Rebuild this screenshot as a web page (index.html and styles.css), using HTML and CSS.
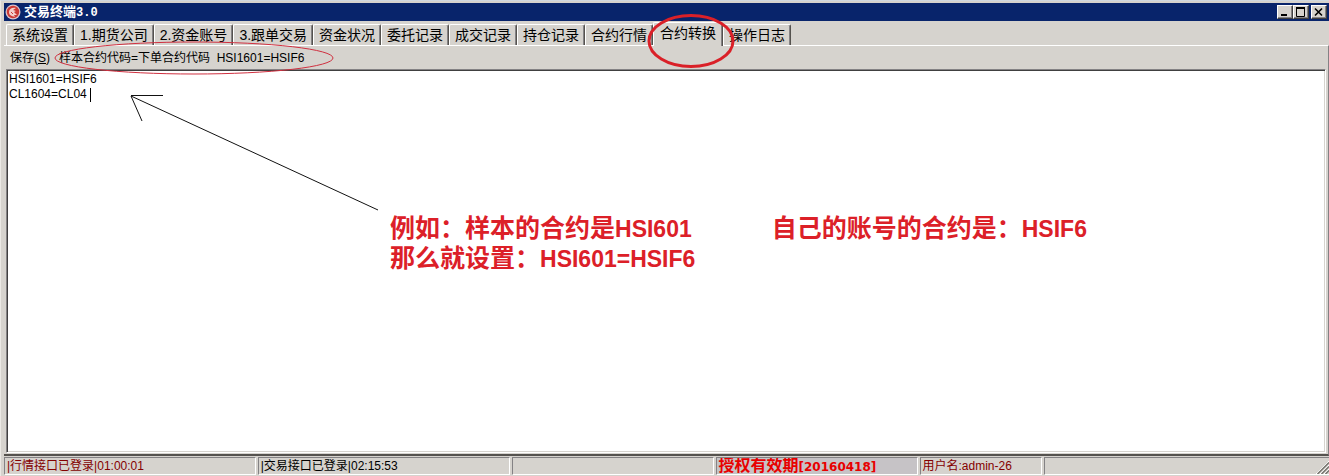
FILE: index.html
```html
<!DOCTYPE html>
<html lang="zh-CN">
<head>
<meta charset="utf-8">
<title>交易终端3.0</title>
<link rel="stylesheet" href="styles.css">
</head>
<body>
<div class="window">
  <header class="titlebar">
    <svg class="app-icon" width="16" height="16" viewBox="0 0 16 16" aria-hidden="true">
      <circle cx="8" cy="8" r="7.500" fill="#d9c3cc"/>
      <circle cx="8" cy="8" r="6.200" fill="#cc3a34"/>
      <path d="M4 8C4 5 7 3 11 4L8 6L11 7L9 8L12 11L9 11L10 13C6 12 4 11 4 8Z" fill="#f3cfcb"/>
      <path d="M6 8L8 10" stroke="#cc3a34" fill="none"/>
    </svg>
    <h1 class="title">交易终端<span class="version">3.0</span></h1>
    <div class="controls">
      <button class="control" aria-label="最小化"><svg width="12" height="10" viewBox="0 0 12 10"><path d="M2 8H8" stroke="#000" stroke-width="2"/></svg></button>
      <button class="control" aria-label="最大化"><svg width="12" height="10" viewBox="0 0 12 10"><path d="M1 1H10M1.500 1V9.500H9.500V1" stroke="#000" fill="none"/><path d="M1 1H10" stroke="#000" stroke-width="2"/></svg></button>
      <button class="control control-close" aria-label="关闭"><svg width="12" height="10" viewBox="0 0 12 10"><path d="M2 1.500L9 8.500M9 1.500L2 8.500" stroke="#000" stroke-width="1.600"/></svg></button>
    </div>
  </header>
  <nav class="tabs" role="tablist">
    <button class="tab" role="tab">系统设置</button>
    <button class="tab" role="tab">1.期货公司</button>
    <button class="tab" role="tab">2.资金账号</button>
    <button class="tab" role="tab">3.跟单交易</button>
    <button class="tab" role="tab">资金状况</button>
    <button class="tab" role="tab">委托记录</button>
    <button class="tab" role="tab">成交记录</button>
    <button class="tab" role="tab">持仓记录</button>
    <button class="tab" role="tab">合约行情</button>
    <button class="tab tab-active" role="tab" aria-selected="true">合约转换</button>
    <button class="tab" role="tab">操作日志</button>
  </nav>
  <main class="panel">
    <div class="toolbar">
      <button class="save" accesskey="s">保存(<u>S</u>)</button>
      <label for="mapping">样本合约代码=下单合约代码&nbsp; HSI1601=HSIF6</label>
    </div>
    <textarea id="mapping" class="editor" spellcheck="false">HSI1601=HSIF6
CL1604=CL04</textarea>
  </main>
  <footer class="status">
    <span class="pane pane-wide maroon">|行情接口已登录|01:00:01</span>
    <span class="pane pane-wide">|交易接口已登录|02:15:53</span>
    <span class="pane pane-medium"></span>
    <span class="pane pane-medium license">授权有效期<span class="date">[20160418]</span></span>
    <span class="pane pane-user maroon">用户名:admin-26</span>
    <span class="pane pane-rest">
      <svg class="grip" width="13" height="13" viewBox="0 0 13 13" aria-hidden="true"><path d="M0 13L13 0M4 13L13 4M8 13L13 8" stroke="#fff"/><path d="M1.500 13L13 1.500M5.500 13L13 5.500M9.500 13L13 9.500" stroke="#77756f" stroke-width="1.500"/></svg>
    </span>
  </footer>
  <svg class="marks" width="760" height="220" viewBox="0 0 760 220" aria-hidden="true">
    <ellipse cx="194" cy="58" rx="139" ry="16" fill="none" stroke="#d03040"/>
    <ellipse cx="691" cy="41" rx="42" ry="25.500" fill="none" stroke="#da2028" stroke-width="3"/>
    <path d="M378 210L131 96M131 95.500H163M131 96L142 121" fill="none" stroke="#111"/>
    <path d="M90.500 88V102" stroke="#000"/>
  </svg>
  <div class="note">
    <p class="note-line"><span>例如：样本的合约是<span class="code">HSI601</span></span><span>自己的账号的合约是：<span class="code">HSIF6</span></span></p>
    <p class="note-line"><span>那么就设置：<span class="code">HSI601=HSIF6</span></span></p>
  </div>
</div>
</body>
</html>
```
FILE: styles.css
```css
* {
  box-sizing: border-box;
}

body {
  margin: 0;
  background: #d6d3ce;
  color: #000;
  font: 12px/16px "Liberation Sans", "Noto Sans CJK SC", sans-serif;
}

button {
  margin: 0;
  padding: 0;
  border: 0;
  background: #d6d3ce;
  color: inherit;
  font: inherit;
}

.window {
  position: relative;
  display: flex;
  flex-direction: column;
  height: 100vh;
  padding: 2px 0 1px 3px;
  border-top: 1px solid #d0d8e0;
  border-left: 1px solid #ebe9e5;
  overflow: hidden;
}

.titlebar {
  display: flex;
  align-items: center;
  flex: none;
  gap: 3px;
  height: 18px;
  padding: 0 2px 0 1px;
  background: #08246b;
}

.title {
  flex: 1;
  margin: 0;
  color: #fff;
  font-size: 13px;
  line-height: 18px;
}

.version {
  font-family: "Liberation Mono", monospace;
  font-size: 12px;
}

.controls {
  display: flex;
}

.control {
  display: flex;
  align-items: center;
  justify-content: center;
  width: 16px;
  height: 14px;
  border: 1px solid;
  border-color: #fff #404040 #404040 #fff;
  box-shadow: inset -1px -1px #848284;
}

.control-close {
  margin-left: 2px;
}

.tabs {
  display: flex;
  align-items: flex-end;
  flex: none;
  height: 24px;
  padding-left: 2px;
}

.tab {
  height: 21px;
  padding: 0 5px;
  border: 1px solid;
  border-color: #fff #55524e transparent #fff;
  border-bottom: 0;
  border-radius: 2px 2px 0 0;
  box-shadow: inset -1px 0 #848284;
  font-size: 14px;
  line-height: 20px;
  white-space: nowrap;
}

.tab-active {
  z-index: 1;
  height: 24px;
  padding: 0 6px 3px;
  margin-bottom: -1px;
}

.panel {
  display: flex;
  flex-direction: column;
  flex: 1;
  min-height: 0;
  padding: 0 2px 1px;
  border-top: 1px solid #fff;
  border-right: 1px solid #848284;
  border-bottom: 2px solid #55524e;
}

.toolbar {
  display: flex;
  align-items: center;
  flex: none;
  gap: 9px;
  height: 23px;
  padding-left: 4px;
}

.editor {
  display: block;
  flex: 1;
  width: 100%;
  min-height: 0;
  margin: 0;
  padding: 2px;
  border: 1px solid;
  border-color: #848284 #fff #fff #848284;
  border-radius: 0;
  outline: 0;
  box-shadow: inset 1px 1px #404040, inset -1px -1px #d6d3ce;
  background: #fff;
  color: #000;
  font: 12px/15px "Liberation Sans", "Noto Sans CJK SC", sans-serif;
  resize: none;
}

.status {
  display: flex;
  flex: none;
  gap: 2px;
  margin-top: 1px;
}

.pane {
  flex: none;
  height: 18px;
  padding-left: 2px;
  border: 1px solid;
  border-color: #848284 #fff #fff #848284;
  white-space: nowrap;
  overflow: hidden;
}

.pane-wide {
  width: 19%;
}

.pane-medium {
  width: 202px;
}

.pane-user {
  width: 122px;
}

.pane-rest {
  display: flex;
  align-items: flex-end;
  justify-content: flex-end;
  flex: 1;
  border-right: 0;
}

.maroon {
  color: #840000;
}

.license {
  background: #c6c3c6;
  color: #e80000;
  font-size: 16px;
  font-weight: bold;
}

.date {
  font-family: "DejaVu Sans", sans-serif;
  font-size: 12px;
}

.marks {
  position: absolute;
  top: -1px;
  left: -1px;
  z-index: 2;
  pointer-events: none;
}

.note {
  position: absolute;
  top: 213px;
  left: 389px;
  z-index: 2;
  color: #dc2028;
  font-size: 25px;
  font-weight: bold;
  line-height: 29px;
  white-space: nowrap;
  pointer-events: none;
}

.note-line {
  display: flex;
  gap: 80px;
  margin: 0;
}

.code {
  font-size: 23px;
}
```
